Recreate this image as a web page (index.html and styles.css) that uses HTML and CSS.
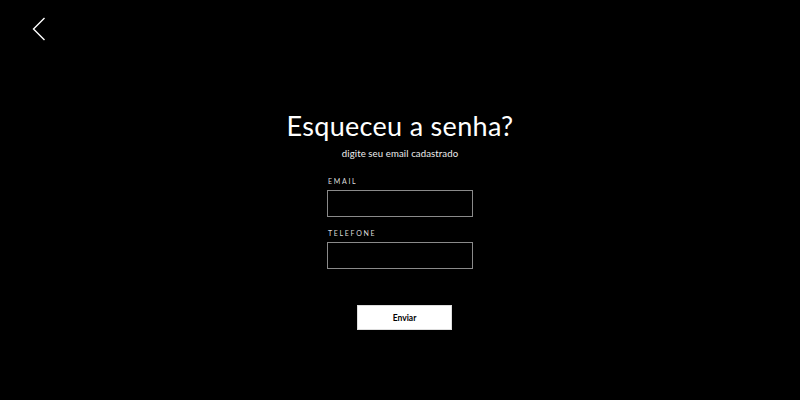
FILE: index.html
```html
<!DOCTYPE html>
<html lang="pt">
<head>
<meta charset="utf-8">
<link rel="stylesheet" href="styles.css">
</head>
<body>
<div class="page">
  <header class="top">
    <a class="back" href="#" aria-label="Voltar">
      <svg width="14" height="24" viewBox="0 0 14 24"><path d="M12.5 1 L1.5 12 L12.5 23" fill="none" stroke="#fff" stroke-width="1.4"/></svg>
    </a>
  </header>
  <main class="main">
    <h1 class="title">Esqueceu a senha?</h1>
    <p class="subtitle">digite seu email cadastrado</p>
    <form class="form">
      <label class="field">
        <span class="label">EMAIL</span>
        <input class="input" type="email">
      </label>
      <label class="field">
        <span class="label">TELEFONE</span>
        <input class="input" type="tel">
      </label>
      <button class="btn" type="button">Enviar</button>
    </form>
  </main>
</div>
</body>
</html>
```
FILE: styles.css
```css
* { box-sizing: border-box; }
html, body { margin: 0; padding: 0; background: #000; }
body { font-family: "Lato", "Open Sans", sans-serif; color: #fff; width: 800px; height: 400px; overflow: hidden; }
.page { display: flex; flex-direction: column; }
.top { padding: 17px 0 0 32px; height: 109px; }
.back { display: block; width: 14px; height: 24px; }
.back svg { display: block; }
.main { display: flex; flex-direction: column; align-items: center; }
.title { margin: 0; font-family: "Lato", sans-serif; font-weight: 400; font-size: 27px; line-height: 34px; letter-spacing: 0.3px; }
.subtitle { margin: 5px 0 0; font-size: 9.6px; line-height: 12px; color: #eee; letter-spacing: 0.1px; }
.form { display: flex; flex-direction: column; align-items: center; margin-top: 17px; }
.field { display: flex; flex-direction: column; width: 146px; margin-bottom: 12px; }
.label { font-size: 7px; line-height: 9px; letter-spacing: 1.7px; color: #ddd; padding-left: 1px; margin-bottom: 4px; }
.input { width: 146px; height: 27px; background: #000; border: 1px solid #8a8a8a; border-radius: 0; outline: none; padding: 0 6px; color: #fff; }
.btn { margin: 24px 0 0 9px; width: 95px; height: 25px; background: #fff; color: #000; border: 1px solid #ddd; border-radius: 0; font-family: "Lato", sans-serif; font-weight: 700; font-size: 8.5px; cursor: pointer; }
```
